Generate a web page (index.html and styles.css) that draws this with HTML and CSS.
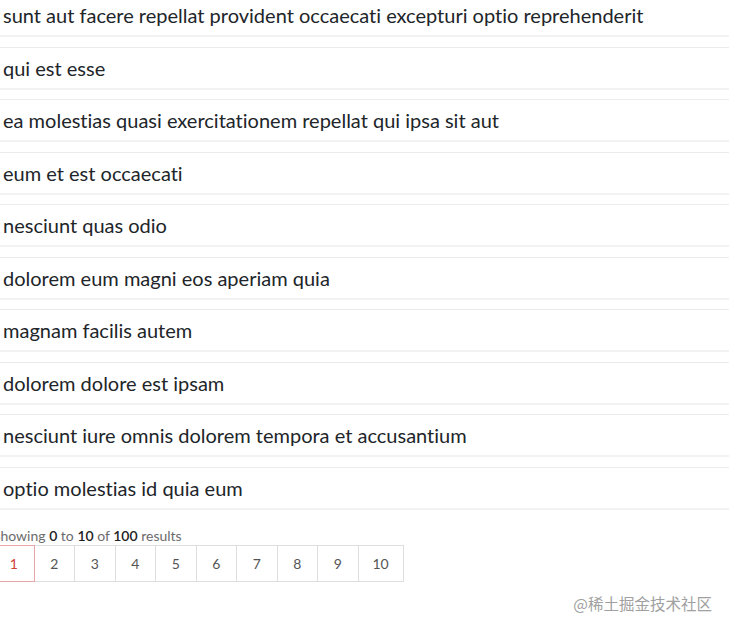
FILE: index.html
```html
<!DOCTYPE html>
<html lang="en">
  <head>
    <meta charset="UTF-8" />
    <title>Posts</title>
    <link rel="stylesheet" href="styles.css">
  </head>
  <body>
    <ul class="posts">
      <li class="post">sunt aut facere repellat provident occaecati excepturi optio reprehenderit</li>
      <li class="post">qui est esse</li>
      <li class="post">ea molestias quasi exercitationem repellat qui ipsa sit aut</li>
      <li class="post">eum et est occaecati</li>
      <li class="post">nesciunt quas odio</li>
      <li class="post">dolorem eum magni eos aperiam quia</li>
      <li class="post">magnam facilis autem</li>
      <li class="post">dolorem dolore est ipsam</li>
      <li class="post">nesciunt iure omnis dolorem tempora et accusantium</li>
      <li class="post">optio molestias id quia eum</li>
    </ul>
    <div class="pager">
      <p class="pager-info">Showing <b>0</b> to <b>10</b> of <b>100</b> results</p>
      <div class="pager-pages">
        <button class="page-btn active">1</button>
        <button class="page-btn">2</button>
        <button class="page-btn">3</button>
        <button class="page-btn">4</button>
        <button class="page-btn">5</button>
        <button class="page-btn">6</button>
        <button class="page-btn">7</button>
        <button class="page-btn">8</button>
        <button class="page-btn">9</button>
        <button class="page-btn wide">10</button>
      </div>
    </div>
    <div class="watermark">@稀土掘金技术社区</div>
  </body>
</html>
```

FILE: styles.css
```css
* {
  box-sizing: border-box;
}

body {
  margin: 0;
  padding: 0;
  background: #ffffff;
  font-family: Lato, "Noto Sans", sans-serif;
  font-variant-ligatures: none;
  color: #212529;
}

.posts {
  list-style: none;
  margin: -6px 0 0 0;
  padding: 0;
  width: 729px;
}

.post {
  height: 43px;
  padding: 0 3px;
  display: flex;
  align-items: center;
  font-size: 20px;
  border-top: 1px solid #ececec;
  border-bottom: 2px solid #f2f2f2;
  margin-bottom: 9.5px;
}
.post:last-child {
  margin-bottom: 0;
}

.pager {
  margin-left: -7px;
  margin-top: 17px;
}

.pager-info {
  margin: 0;
  font-size: 14px;
  line-height: 18px;
  color: #6b6b6b;
}
.pager-info b {
  color: #222;
  font-weight: 600;
}

.pager-pages {
  display: flex;
}

.page-btn {
  width: 41.5px;
  height: 37px;
  margin: 0 0 0 -1px;
  padding: 0;
  background: #fff;
  border: 1px solid #dedede;
  font-family: inherit;
  font-size: 14px;
  color: #555;
}
.page-btn:first-child {
  margin-left: 0;
}
.page-btn.active {
  color: #d43f3a;
  border-color: #e9a6a6;
  position: relative;
  z-index: 1;
}
.page-btn.wide {
  width: 46px;
}

.watermark {
  text-align: right;
  padding: 10px 18px 0 0;
  font-family: "Noto Sans CJK SC", sans-serif;
  font-size: 15.5px;
  color: #a0a0a0;
}
```
